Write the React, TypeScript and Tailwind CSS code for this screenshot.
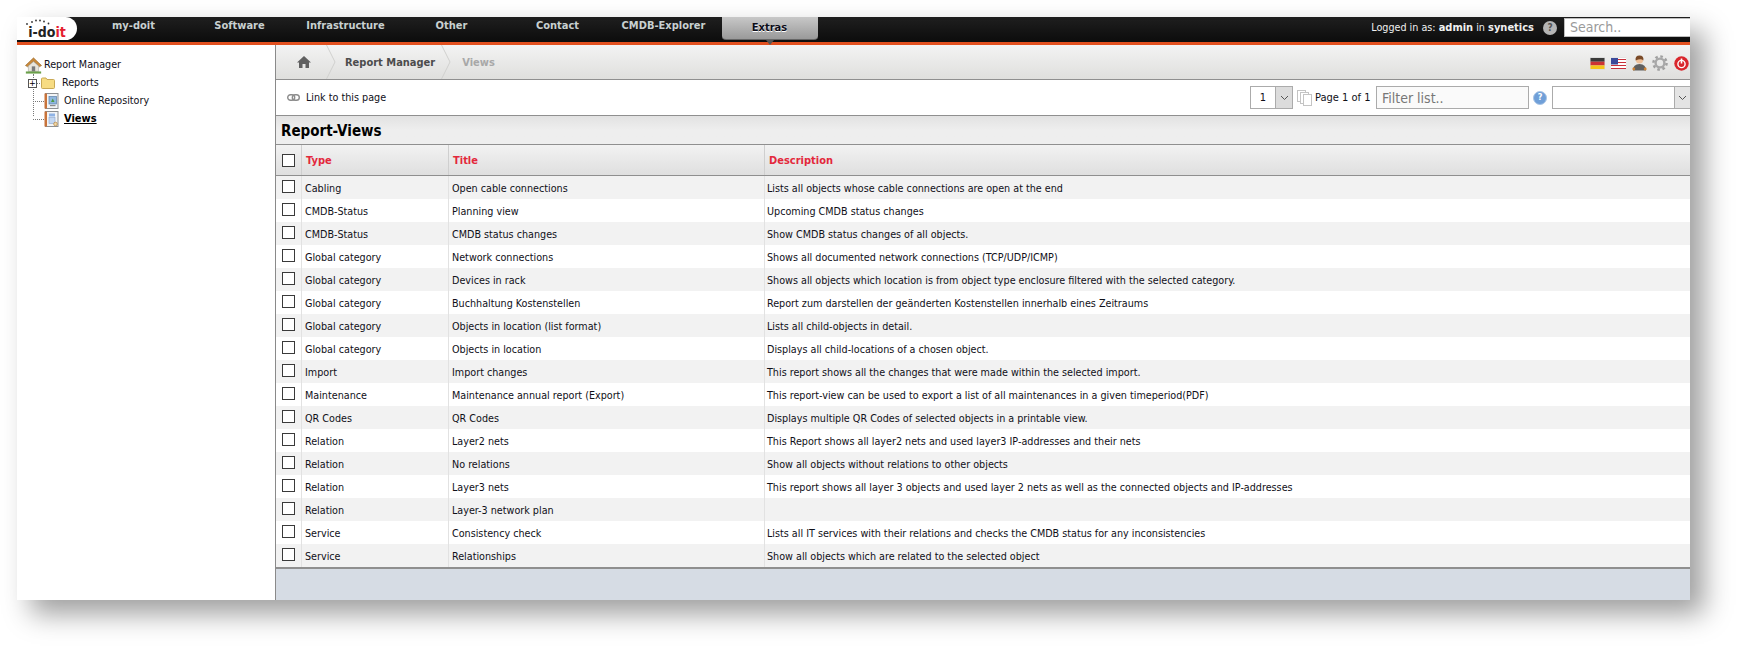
import React from "react";

const rows: [string, string, string][] = [
  ["Cabling", "Open cable connections", "Lists all objects whose cable connections are open at the end"],
  ["CMDB-Status", "Planning view", "Upcoming CMDB status changes"],
  ["CMDB-Status", "CMDB status changes", "Show CMDB status changes of all objects."],
  ["Global category", "Network connections", "Shows all documented network connections (TCP/UDP/ICMP)"],
  ["Global category", "Devices in rack", "Shows all objects which location is from object type enclosure filtered with the selected category."],
  ["Global category", "Buchhaltung Kostenstellen", "Report zum darstellen der geänderten Kostenstellen innerhalb eines Zeitraums"],
  ["Global category", "Objects in location (list format)", "Lists all child-objects in detail."],
  ["Global category", "Objects in location", "Displays all child-locations of a chosen object."],
  ["Import", "Import changes", "This report shows all the changes that were made within the selected import."],
  ["Maintenance", "Maintenance annual report (Export)", "This report-view can be used to export a list of all maintenances in a given timeperiod(PDF)"],
  ["QR Codes", "QR Codes", "Displays multiple QR Codes of selected objects in a printable view."],
  ["Relation", "Layer2 nets", "This Report shows all layer2 nets and used layer3 IP-addresses and their nets"],
  ["Relation", "No relations", "Show all objects without relations to other objects"],
  ["Relation", "Layer3 nets", "This report shows all layer 3 objects and used layer 2 nets as well as the connected objects and IP-addresses"],
  ["Relation", "Layer-3 network plan", ""],
  ["Service", "Consistency check", "Lists all IT services with their relations and checks the CMDB status for any inconsistencies"],
  ["Service", "Relationships", "Show all objects which are related to the selected object"],
];

const nav = ["my-doit", "Software", "Infrastructure", "Other", "Contact", "CMDB-Explorer"];

const Check = () => <span className="block w-[13px] h-[13px] border border-[#3a3a3a] bg-white" />;

const Crumb = () => (
  <svg width="10" height="34" viewBox="0 0 10 34" className="shrink-0">
    <path d="M0.5 0 L9 17 L0.5 34" fill="none" stroke="#d0d0ce" />
  </svg>
);

const Home = () => (
  <svg width="17" height="17" viewBox="0 0 20 20">
    <path d="M0.5 10 L10 1 L19.5 10 L17 11.5 L10 5 L3 11.5Z" fill="#c98a3c" stroke="#8a5a20" strokeWidth="0.6" />
    <path d="M4 10.5 L10 5.5 L16 10.5 V17 H4Z" fill="#e8e4da" stroke="#9a9a90" strokeWidth="0.6" />
    <rect x="8" y="11" width="4" height="6" fill="#7a7a7a" />
    <rect x="1" y="17" width="18" height="2.5" fill="#6aa04a" />
  </svg>
);

const Folder = () => (
  <svg width="14" height="12" viewBox="0 0 14 12">
    <path d="M0.5 2 Q0.5 1 1.5 1 H5 L6 2.5 H12.5 Q13.5 2.5 13.5 3.5 V10.5 Q13.5 11.5 12.5 11.5 H1.5 Q0.5 11.5 0.5 10.5Z" fill="#f7dc83" stroke="#c9a955" />
  </svg>
);

const Book = ({ kind }: { kind: "repo" | "views" }) => (
  <svg width="15" height="16" viewBox="0 0 15 16">
    <rect x="1.5" y="0.5" width="12.5" height="15" fill="#f2f4f6" stroke="#8c8f93" />
    <rect x="0.5" y="0.5" width="2.5" height="15" fill="#c8733a" />
    {kind === "repo" ? (
      <>
        <rect x="5" y="3.5" width="7.5" height="7.5" fill="#8fb7df" stroke="#5a7fa8" strokeWidth="0.7" />
        <path d="M7 9 L8.7 5.5 L10.5 9Z" fill="#4f9a43" />
        <rect x="6" y="12" width="5.5" height="1.2" fill="#8a8a8a" />
      </>
    ) : (
      <>
        <rect x="5" y="2.5" width="6" height="3" fill="#8fb3e6" />
        <rect x="5" y="6.5" width="6" height="6" fill="#c3d7f2" stroke="#89a6cf" strokeWidth="0.6" />
        <circle cx="11.5" cy="13" r="1.8" fill="#f0d9a8" stroke="#b8843c" strokeWidth="0.7" />
      </>
    )}
  </svg>
);

const Chevron = () => (
  <svg width="9" height="6" viewBox="0 0 9 6">
    <path d="M1 1 L4.5 4.5 L8 1" fill="none" stroke="#555" strokeWidth="1" />
  </svg>
);

const Round = ({ children }: { children: React.ReactNode }) => (
  <span className="flex items-center justify-center w-[14px] h-[14px] rounded-full bg-[#6f9fd8] border border-[#a9c5e6] text-white text-[9px] font-bold leading-none">
    {children}
  </span>
);

export default function App() {
  return (
    <div className="w-[1738px] h-[648px] bg-white pt-[17px] pl-[17px] overflow-hidden font-['DejaVu_Sans_Condensed','DejaVu_Sans',sans-serif] text-[10.7px] text-[#101018]">
      <div className="w-[1673px] h-[583px] bg-white flex flex-col shadow-[14px_14px_26px_rgba(0,0,0,0.38)]">
        {/* Top bar */}
        <header className="h-[28px] shrink-0 flex bg-gradient-to-b from-[#1f1f1f] to-[#0c0c0c] border-b-[3px] border-[#e2501f]">
          <div className="w-[60px] h-[23px] bg-white rounded-r-[14px] relative flex items-end justify-center pb-[1px]">
            <span className="font-bold text-[14px] leading-[14px] text-[#222]">
              i-do<span className="text-[#e5202e]">it</span>
            </span>
            <svg width="26" height="6" viewBox="0 0 26 6" className="absolute left-[8px] top-[2px]">
              <g fill="#333">
                <circle cx="2" cy="5" r="0.9" /><circle cx="7" cy="3" r="0.9" /><circle cx="11" cy="1.5" r="0.9" />
                <circle cx="15" cy="1.5" r="0.9" /><circle cx="19" cy="2.5" r="0.9" /><circle cx="23.5" cy="4.5" r="0.9" />
              </g>
            </svg>
          </div>
          <nav className="flex ml-[3.5px] font-bold text-[11px] text-[#c8d0d0]">
            {nav.map((n) => (
              <div key={n} className="w-[106px] h-[19px] flex items-center justify-center">{n}</div>
            ))}
            <div className="w-[106px] px-[5px]">
              <div className="relative h-[23px] pt-[1px] rounded-b-[4px] bg-gradient-to-b from-[#c8c8c8] to-[#9a9a9a] flex items-center justify-center text-[#0c0c18] [text-shadow:0_1px_0_#fff] border-b border-[#666]">
                Extras
                <span className="absolute left-1/2 -ml-[4px] -bottom-[6px] w-0 h-0 border-x-[4px] border-x-transparent border-t-[5px] border-t-[#555]" />
              </div>
            </div>
          </nav>
          <div className="ml-auto flex items-start">
            <span className="h-[19px] flex items-center text-[#f0f0f0] pt-[3px]">
              Logged in as:&nbsp;<b className="text-[11px]">admin</b>&nbsp;in&nbsp;<b className="text-[11px]">synetics</b>
            </span>
            <span className="ml-[9px] mt-[4px] w-[14px] h-[14px] rounded-full bg-[#b5b5b5] text-[#555] text-[10px] font-bold leading-[14px] text-center">?</span>
            <div className="ml-[7px] mt-[1px] w-[126px] h-[19px] bg-white border border-[#bdbdbd] border-r-0 pl-[5px] text-[14px] leading-[17px] text-[#9a9a9a]">Search..</div>
          </div>
        </header>

        <div className="flex flex-1 min-h-0">
          {/* Sidebar */}
          <aside className="w-[258px] shrink-0 pl-[8px] pt-[11px]">
            <div className="flex items-center h-[18px] gap-[1px]"><Home /><span className="ml-[1px]">Report Manager</span></div>
            <div className="relative pl-[11px]">
              <span className="absolute left-[7.5px] top-[0px] h-[42px] border-l border-dotted border-[#777]" />
              <div className="flex items-center h-[18px]">
                <span className="relative z-10 -ml-[8px] w-[9px] h-[9px] border border-[#555] bg-white flex items-center justify-center text-[9px] leading-none text-black">+</span>
                <span className="w-[3px] border-t border-dotted border-[#777]" />
                <span className="ml-[1px]"><Folder /></span>
                <span className="ml-[7px]">Reports</span>
              </div>
              <div className="flex items-center h-[18px]">
                <span className="-ml-[3px] w-[11px] border-t border-dotted border-[#777]" />
                <Book kind="repo" />
                <span className="ml-[5px]">Online Repository</span>
              </div>
              <div className="flex items-center h-[18px]">
                <span className="-ml-[3px] w-[11px] border-t border-dotted border-[#777]" />
                <Book kind="views" />
                <span className="ml-[5px] font-bold underline text-black text-[11px]">Views</span>
              </div>
            </div>
          </aside>

          {/* Main */}
          <main className="flex-1 min-w-0 flex flex-col border-l border-[#8a8a8a] bg-[#d6dce4]">
            {/* Breadcrumb */}
            <div className="h-[35px] shrink-0 flex items-center bg-gradient-to-b from-[#f3f3f3] to-[#dfdfdd] border-b border-[#8f8f8f] font-bold text-[11px]">
              <svg width="14" height="12" viewBox="0 0 14 12" className="ml-[21px] shrink-0">
                <path d="M7 0 L14 6.5 H12 V12 H8.5 V8 H5.5 V12 H2 V6.5 H0Z" fill="#606060" />
              </svg>
              <span className="ml-[15px]"><Crumb /></span>
              <span className="ml-[9px] pt-[2px] text-[#4c4c4c]">Report Manager</span>
              <span className="ml-[6px]"><Crumb /></span>
              <span className="ml-[11px] pt-[2px] text-[#a8a8a8]">Views</span>
              <div className="ml-auto mr-[1px] pt-[2px] flex items-center">
                <svg width="15" height="13" viewBox="0 0 15 13"><rect width="15" height="13" fill="#ddd" /><rect x="0.5" y="1" width="14" height="3.7" fill="#3a3a3a" /><rect x="0.5" y="4.7" width="14" height="3.7" fill="#c33" /><rect x="0.5" y="8.4" width="14" height="3.6" fill="#f5c518" /></svg>
                <svg width="15" height="13" viewBox="0 0 15 13" className="ml-[6px]"><rect width="15" height="13" fill="#e4e4e4" /><rect y="1" width="15" height="11" fill="#fff" /><path d="M0 2.5h15M0 5.5h15M0 8.5h15M0 11.5h15" stroke="#c8303a" strokeWidth="1.2" /><rect y="1" width="7" height="6.5" fill="#3b4a9a" /></svg>
                <svg width="15" height="16" viewBox="0 0 15 16" className="ml-[6px]"><path d="M1 15.5 Q1 9 7.5 9 Q14 9 14 15.5Z" fill="#5f5f5f" /><circle cx="7.5" cy="5" r="3.6" fill="#eec09a" /><path d="M3.6 5.5 Q3 0.5 7.5 0.5 Q12 0.5 11.4 5.5 Q9 3 3.6 5.5Z" fill="#7a4a28" /><circle cx="1.8" cy="14" r="1.4" fill="#d08030" /><circle cx="13.2" cy="14" r="1.4" fill="#d08030" /></svg>
                <svg width="16" height="16" viewBox="0 0 16 16" className="ml-[5px]"><circle cx="8" cy="8" r="4.4" fill="none" stroke="#a8a8a8" strokeWidth="2.4" /><circle cx="8" cy="8" r="6.6" fill="none" stroke="#a0a0a0" strokeWidth="2.4" strokeDasharray="2.6 2.6" /></svg>
                <svg width="15" height="15" viewBox="0 0 15 15" className="ml-[6px]"><circle cx="7.5" cy="7.5" r="7.2" fill="#d9262c" /><circle cx="7.5" cy="8" r="3.6" fill="none" stroke="#fff" strokeWidth="1.4" /><path d="M7.5 2.5 V7.5" stroke="#fff" strokeWidth="1.6" /></svg>
              </div>
            </div>

            {/* Toolbar */}
            <div className="h-[36px] shrink-0 flex items-center bg-white border-b border-[#8f8f8f]">
              <svg width="13" height="7" viewBox="0 0 13 7" className="ml-[11px]"><rect x="0.7" y="0.7" width="7" height="5.6" rx="2.8" fill="none" stroke="#8c8c8c" strokeWidth="1.4" /><rect x="5.3" y="0.7" width="7" height="5.6" rx="2.8" fill="none" stroke="#8c8c8c" strokeWidth="1.4" /></svg>
              <span className="ml-[6px] pt-[1px] whitespace-nowrap">Link to this page</span>
              <div className="ml-auto flex items-center h-[23px]">
                <div className="w-[43px] h-[23px] flex border border-[#ababab]">
                  <span className="flex-1 text-center text-[11px] leading-[22px]">1</span>
                  <span className="w-[17px] bg-[#dcdcdc] border-l border-[#ababab] flex items-center justify-center"><Chevron /></span>
                </div>
                <svg width="15" height="16" viewBox="0 0 15 16" className="ml-[4px]">
                  <rect x="0.5" y="0.5" width="8" height="11" fill="#fff" stroke="#c4c4c4" />
                  <rect x="3.5" y="2.5" width="8" height="11" fill="#fff" stroke="#c4c4c4" />
                  <rect x="6.5" y="4.5" width="8" height="11" fill="#fff" stroke="#c4c4c4" />
                </svg>
                <span className="ml-[3px] pt-[1px] w-[58px] text-[11px] whitespace-nowrap">Page 1 of 1</span>
                <div className="ml-[3px] w-[153px] h-[23px] border border-[#ababab] bg-[#fafafa] pl-[5px] text-[14px] leading-[22px] text-[#777]">Filter list..</div>
                <span className="ml-[4px]"><Round>?</Round></span>
                <div className="ml-[5px] w-[138px] h-[23px] flex border border-[#ababab] border-r-0 bg-white">
                  <span className="flex-1" />
                  <span className="w-[16px] bg-[#e4e4e4] border-l border-[#ababab] flex items-center justify-center"><Chevron /></span>
                </div>
              </div>
            </div>

            {/* Title */}
            <div className="h-[29px] shrink-0 flex items-center pl-[5px] pt-[3px] bg-gradient-to-b from-[#e2e2e2] via-[#eeeeee] to-[#eeeeee] border-b border-[#8f8f8f] font-bold text-[15px] text-black">
              Report-Views
            </div>

            {/* Table header */}
            <div className="h-[31px] shrink-0 grid grid-cols-[26px_147px_316px_1fr] bg-gradient-to-b from-[#f2f2f2] to-[#dfdfdf] border-b border-[#8f8f8f] font-bold text-[11px] text-[#e3283c]">
              <div className="flex items-center pl-[6px] border-r border-[#cfcfcf]"><Check /></div>
              <div className="flex items-center pl-[4px] pt-[2px] border-r border-[#cfcfcf]">Type</div>
              <div className="flex items-center pl-[4px] pt-[2px] border-r border-[#cfcfcf]">Title</div>
              <div className="flex items-center pl-[4px] pt-[2px]">Description</div>
            </div>

            {/* Rows */}
            <div className="shrink-0 border-b-[2px] border-[#8f8f8f]">
              {rows.map((r, i) => (
                <div key={i} className={`h-[23px] grid grid-cols-[26px_147px_316px_1fr] ${i % 2 === 0 ? "bg-[#f2f2f2]" : "bg-white"}`}>
                  <div className="pl-[6px] pt-[3.5px] border-r border-[#e2e2e2]"><Check /></div>
                  <div className="flex items-center pl-[3px] pt-[3px] border-r border-[#e2e2e2]">{r[0]}</div>
                  <div className="flex items-center pl-[3px] pt-[3px] border-r border-[#e2e2e2]">{r[1]}</div>
                  <div className="flex items-center pl-[2px] pt-[3px] whitespace-nowrap">{r[2]}</div>
                </div>
              ))}
            </div>
          </main>
        </div>
      </div>
    </div>
  );
}
